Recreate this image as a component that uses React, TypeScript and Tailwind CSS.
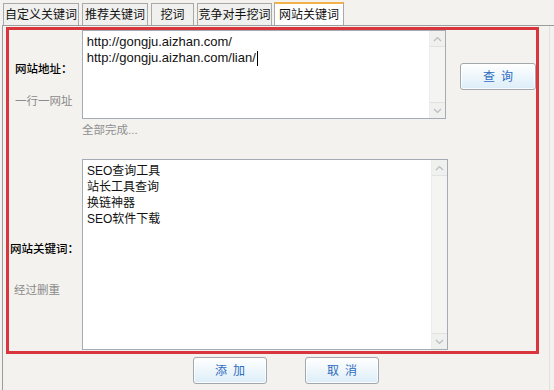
import React from "react";

const tabs = [
  { label: "自定义关键词", w: "w-[76px]" },
  { label: "推荐关键词", w: "w-[66px]" },
  { label: "挖词", w: "w-[43px]" },
  { label: "竞争对手挖词", w: "w-[75px]" },
];

function Chevron({ up }: { up?: boolean }) {
  return (
    <svg width="9" height="6" viewBox="0 0 9 6">
      <path
        d={up ? "M1 5 L4.5 1.5 L8 5" : "M1 1 L4.5 4.5 L8 1"}
        fill="none"
        stroke="#b8bcc0"
        strokeWidth="1.2"
      />
    </svg>
  );
}

function Scrollbar() {
  return (
    <div className="w-[16px] h-full bg-[#f4f4f3] border-l border-[#ececec] flex flex-col justify-between">
      <div className="h-[16px] flex items-center justify-center bg-[#f0f0ef] border-b border-[#e2e2e2]">
        <Chevron up />
      </div>
      <div className="h-[16px] flex items-center justify-center bg-[#f0f0ef] border-t border-[#e2e2e2]">
        <Chevron />
      </div>
    </div>
  );
}

function Btn({ children, className = "" }: { children: React.ReactNode; className?: string }) {
  return (
    <div
      className={
        "h-[27px] w-[74px] rounded-[3px] border border-[#a3a8ad] bg-gradient-to-b from-white to-[#dcedf8] flex items-center justify-center text-[12px] text-[#2d6cc0] tracking-[6px] pl-[6px] shadow-[inset_0_0_0_1px_rgba(255,255,255,0.8)] " +
        className
      }
    >
      {children}
    </div>
  );
}

export default function App() {
  return (
    <div className="w-[554px] h-[390px] bg-[#f3f2ee] overflow-hidden font-['Liberation_Sans','Noto_Sans_CJK_SC',sans-serif] text-[11px] text-[#111]">
      {/* tabs */}
      <div className="h-[25px] pt-[3px] pl-[3px] flex gap-[3px] items-stretch">
        {tabs.map((t) => (
          <div
            key={t.label}
            className={
              t.w +
              " h-[22px] border border-b-0 border-[#a9a9a9] bg-[#f0f0ee] flex items-center justify-center text-[12px] leading-none"
            }
          >
            {t.label}
          </div>
        ))}
        <div className="w-[70px] h-[23px] -mt-[1px] -ml-[1px] border border-b-0 border-[#a9a9a9] border-t-2 border-t-[#f2b44a] bg-white flex items-center justify-center text-[12px] leading-none relative z-10">
          网站关键词
        </div>
      </div>

      {/* panel */}
      <div className="ml-[2px] h-[365px] border-l border-t border-[#9c9c9c] relative">
        <div className="ml-[3px] mt-[1px] w-[533px] h-[327px] border-[3px] border-[#d8353d] flex flex-col overflow-hidden">
          {/* top row */}
          <div className="flex h-[89px]">
            <div className="w-[73px] flex flex-col pl-[6px] pt-[31px] gap-[16px] leading-[16px]">
              <div className="font-medium text-[11.5px] text-black">网站地址：</div>
              <div className="text-[#8a8a8a] text-[11.5px]">一行一网址</div>
            </div>
            <div className="w-[366px] h-full border border-[#a5abb4] bg-white flex">
              <div className="flex-1 pl-[4px] pt-[3px] text-[13px] leading-[16px] text-[#111]">
                <div>http://gongju.aizhan.com/</div>
                <div className="flex items-center">
                  http://gongju.aizhan.com/lian/
                  <span className="inline-block w-px h-[15px] bg-black ml-[1px]" />
                </div>
              </div>
              <Scrollbar />
            </div>
            <div className="flex-1 pl-[14px] pt-[33px]">
              <Btn className="w-[76px] h-[26px]">查询</Btn>
            </div>
          </div>
          <div className="pl-[73px] pt-[3px] h-[40px] text-[#8f8f8f] text-[11.5px] leading-[16px]">
            全部完成...
          </div>
          {/* bottom row */}
          <div className="flex h-[191px]">
            <div className="w-[73px] flex flex-col pt-[82px] leading-[16px]">
              <div className="pl-[1px] font-medium text-[11.5px] text-black">网站关键词：</div>
              <div className="pl-[5px] mt-[25px] text-[#8a8a8a] text-[11.5px]">经过删重</div>
            </div>
            <div className="w-[366px] h-full border border-[#a5abb4] bg-white flex">
              <div className="flex-1 pl-[4px] pt-[3px] text-[12px] leading-[16px] text-[#111]">
                <div>SEO查询工具</div>
                <div>站长工具查询</div>
                <div>换链神器</div>
                <div>SEO软件下载</div>
              </div>
              <Scrollbar />
            </div>
          </div>
        </div>
        {/* bottom buttons */}
        <div className="flex pl-[190px] gap-[38px] mt-[3px]">
          <Btn>添加</Btn>
          <Btn>取消</Btn>
        </div>
        <div className="absolute right-[4px] top-0 bottom-0 w-px bg-[#e2e1dd]" />
      </div>
    </div>
  );
}
